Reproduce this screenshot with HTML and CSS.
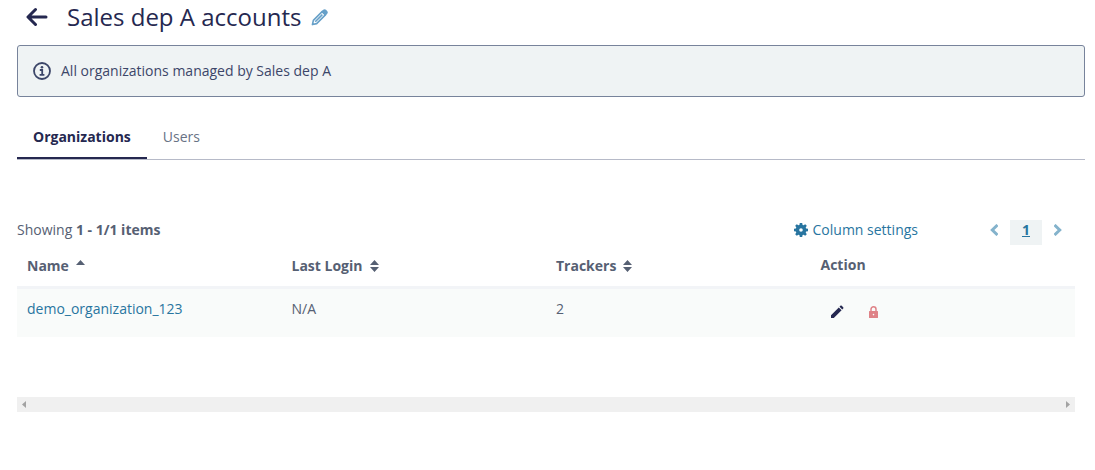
FILE: index.html
```html
<!DOCTYPE html>
<html lang="en">
<head>
  <meta charset="UTF-8">
  <meta name="viewport" content="width=device-width, initial-scale=1.0">
  <title>Sales dep A accounts</title>
  <link rel="stylesheet" href="styles.css">
</head>
<body>
  <header class="page-header">
    <a class="back-link" href="#" aria-label="Back">
      <svg width="22" height="20" viewBox="0 0 22 20" fill="none" stroke="currentColor" stroke-width="3" stroke-linecap="round" stroke-linejoin="round">
        <path d="M9.5 2.5L2 10l7.5 7.5M2.5 10H20"/>
      </svg>
    </a>
    <h1>Sales dep A accounts</h1>
    <button class="icon-button rename-button" type="button" aria-label="Rename">
      <svg width="17" height="17" viewBox="0 0 18 18" fill="none" stroke="currentColor" stroke-width="1.700" stroke-linejoin="round">
        <path d="M1.5 16.5l1-4.5L12 2.500l3.500 3.500L6 15.500z"/>
        <path d="M4.500 13.500l7.500-7.500"/>
        <path d="M12 3l1.500-1.500c.6-.6 1.200-.6 1.800 0l1.200 1.200c.6.6.6 1.200 0 1.800L15 6z" fill="currentColor"/>
      </svg>
    </button>
  </header>

  <div class="alert">
    <svg width="18" height="18" viewBox="0 0 18 18" fill="none" stroke="currentColor" stroke-width="1.800">
      <circle cx="9" cy="9" r="8"/>
      <path d="M6.800 8h2.400v5M6.600 12.900h4.800"/>
      <circle cx="9" cy="5.200" r="1.300" fill="currentColor" stroke="none"/>
    </svg>
    <span>All organizations managed by Sales dep A</span>
  </div>

  <nav class="tabs">
    <a class="tab active" href="#">Organizations</a>
    <a class="tab" href="#">Users</a>
  </nav>

  <main class="grid">
    <div class="toolbar">
      <div class="summary">Showing <b>1 - 1/1 items</b></div>
      <button class="settings-button" type="button">
        <svg width="14" height="14" viewBox="0 0 14 14" fill="currentColor">
          <path fill-rule="evenodd" d="M5.800 0h2.400l.4 1.900 1 .4L11.200 1.200l1.600 1.600-1.100 1.600.4 1 1.900.4v2.400l-1.900.4-.4 1 1.100 1.600-1.600 1.600-1.600-1.100-1 .4-.4 1.900H5.800l-.4-1.900-1-.4-1.600 1.100-1.600-1.600 1.100-1.600-.4-1L0 8.200V5.800l1.900-.4.4-1L1.200 2.800l1.600-1.600 1.600 1.100 1-.4zM7 5.200a1.800 1.800 0 100 3.600 1.800 1.800 0 000-3.600z"/>
        </svg>
        Column settings
      </button>
      <nav class="pager" aria-label="Pages">
        <a class="arrow" href="#" aria-label="Previous page">
          <svg width="8" height="12" viewBox="0 0 8 12" fill="none" stroke="currentColor" stroke-width="3"><path d="M7.500 1L2.300 6l5.200 5"/></svg>
        </a>
        <a class="page" href="#">1</a>
        <a class="arrow" href="#" aria-label="Next page">
          <svg width="8" height="12" viewBox="0 0 8 12" fill="none" stroke="currentColor" stroke-width="3"><path d="M.5 1l5.200 5L.5 11"/></svg>
        </a>
      </nav>
    </div>

    <table>
      <thead>
        <tr>
          <th>
            <button class="sort-button" type="button">Name
              <svg width="9" height="12" viewBox="0 0 9 12" fill="currentColor"><path d="M0 5l4.500-5L9 5z"/></svg>
            </button>
          </th>
          <th>
            <button class="sort-button" type="button">Last Login
              <svg width="9" height="12" viewBox="0 0 9 12" fill="currentColor"><path d="M0 5l4.500-5L9 5zM0 7h9l-4.500 5z"/></svg>
            </button>
          </th>
          <th>
            <button class="sort-button" type="button">Trackers
              <svg width="9" height="12" viewBox="0 0 9 12" fill="currentColor"><path d="M0 5l4.500-5L9 5zM0 7h9l-4.500 5z"/></svg>
            </button>
          </th>
          <th>Action</th>
        </tr>
      </thead>
      <tbody>
        <tr>
          <td><a href="#">demo_organization_123</a></td>
          <td>N/A</td>
          <td>2</td>
          <td>
            <div class="actions">
              <button class="icon-button edit-button" type="button" aria-label="Edit">
                <svg width="14" height="14" viewBox="0 0 14 14" fill="currentColor">
                  <path d="M1 13V10.200L8.800 2.400l2.800 2.800L3.800 13zM9.500 1.700l.9-.9c.4-.4.9-.4 1.300 0l1.500 1.500c.4.4.4.9 0 1.300l-.9.900z"/>
                </svg>
              </button>
              <button class="icon-button lock-button" type="button" aria-label="Block">
                <svg width="9" height="12" viewBox="0 0 9 12" fill="currentColor">
                  <path fill-rule="evenodd" d="M.6 5h7.800c.4 0 .6.200.6.600v5.800c0 .4-.2.600-.6.600H.6c-.4 0-.6-.2-.6-.6V5.600C0 5.200.2 5 .6 5zM4.500 7.800a.8.800 0 100 1.600.8.800 0 000-1.600z"/>
                  <path d="M2 5.500V3.300a2.500 2.500 0 015 0v2.200" fill="none" stroke="currentColor" stroke-width="1.500"/>
                </svg>
              </button>
            </div>
          </td>
        </tr>
      </tbody>
    </table>

    <div class="scroll-track">
      <svg width="4" height="7" viewBox="0 0 4 7" fill="currentColor"><path d="M4 0v7L0 3.500z"/></svg>
      <svg width="4" height="7" viewBox="0 0 4 7" fill="currentColor"><path d="M0 0v7l4-3.500z"/></svg>
    </div>
  </main>
</body>
</html>
```
FILE: styles.css
```css
* {
  box-sizing: border-box;
}
body {
  margin: 0;
  padding: 0 10px 0 17px;
  font-family: "Open Sans", "Noto Sans", sans-serif;
  font-size: 14px;
  line-height: 20px;
  color: #566073;
  background-color: #fff;
}
svg {
  display: block;
  flex: none;
}
a {
  color: #2875a0;
  text-decoration: none;
}
button {
  padding: 0;
  border: none;
  background: none;
  font: inherit;
  color: inherit;
  cursor: pointer;
}

/* Header */
.page-header {
  display: flex;
  align-items: center;
  padding: 0 9px 11px;
  color: #252850;
}
.page-header h1 {
  margin: 0 10px 0 19px;
  font-size: 24px;
  line-height: 34px;
  font-weight: 400;
}
.back-link {
  color: #252850;
}
.rename-button {
  color: #67a0c8;
}

.alert {
  display: flex;
  align-items: center;
  gap: 10px;
  padding: 15px;
  border: 1px solid #77839b;
  border-radius: 3px;
  background-color: #eff3f4;
  color: #3c4669;
}

/* Tabs */
.tabs {
  display: flex;
  margin-top: 20px;
  border-bottom: 1px solid #b6bac8;
}
.tab {
  padding: 10px 16px;
  border-bottom: 2px solid transparent;
  color: #687285;
}
.tab.active {
  border-color: #252850;
  color: #252850;
  font-weight: 700;
}

.grid {
  padding: 60px 10px 0 0;
}
.toolbar {
  display: flex;
  align-items: flex-start;
}
.summary {
  flex: 1;
}
.settings-button {
  display: flex;
  align-items: center;
  gap: 5px;
  color: #2875a0;
}
.pager {
  display: flex;
  align-items: flex-start;
  gap: 12px;
  margin: 0 13px 0 72px;
}
.arrow {
  padding: 4px 0;
  color: #84b3cc;
}
.page {
  width: 32px;
  padding-bottom: 5px;
  background-color: #eff3f4;
  font-weight: 700;
  text-align: center;
  text-decoration: underline;
}

/* Table */
table {
  width: 100%;
  table-layout: fixed;
  border-collapse: collapse;
}
th {
  padding: 10px;
  border-bottom: 3px solid #f2f4f7;
  text-align: left;
  vertical-align: top;
  font-weight: 700;
}
td {
  height: 49px;
  padding: 10px;
  background-color: #f9fbfa;
  vertical-align: top;
}
.sort-button {
  display: flex;
  align-items: center;
  gap: 7px;
  padding-top: 1px;
}
.actions {
  display: flex;
  align-items: center;
  gap: 25px;
  padding: 6px 9px 0;
}
.edit-button {
  color: #252850;
}
.lock-button {
  color: #df8287;
}

.scroll-track {
  display: flex;
  align-items: center;
  justify-content: space-between;
  height: 15px;
  margin-top: 60px;
  padding: 0 5px;
  background-color: #f0f0f0;
  color: #a3a3a3;
}
```
